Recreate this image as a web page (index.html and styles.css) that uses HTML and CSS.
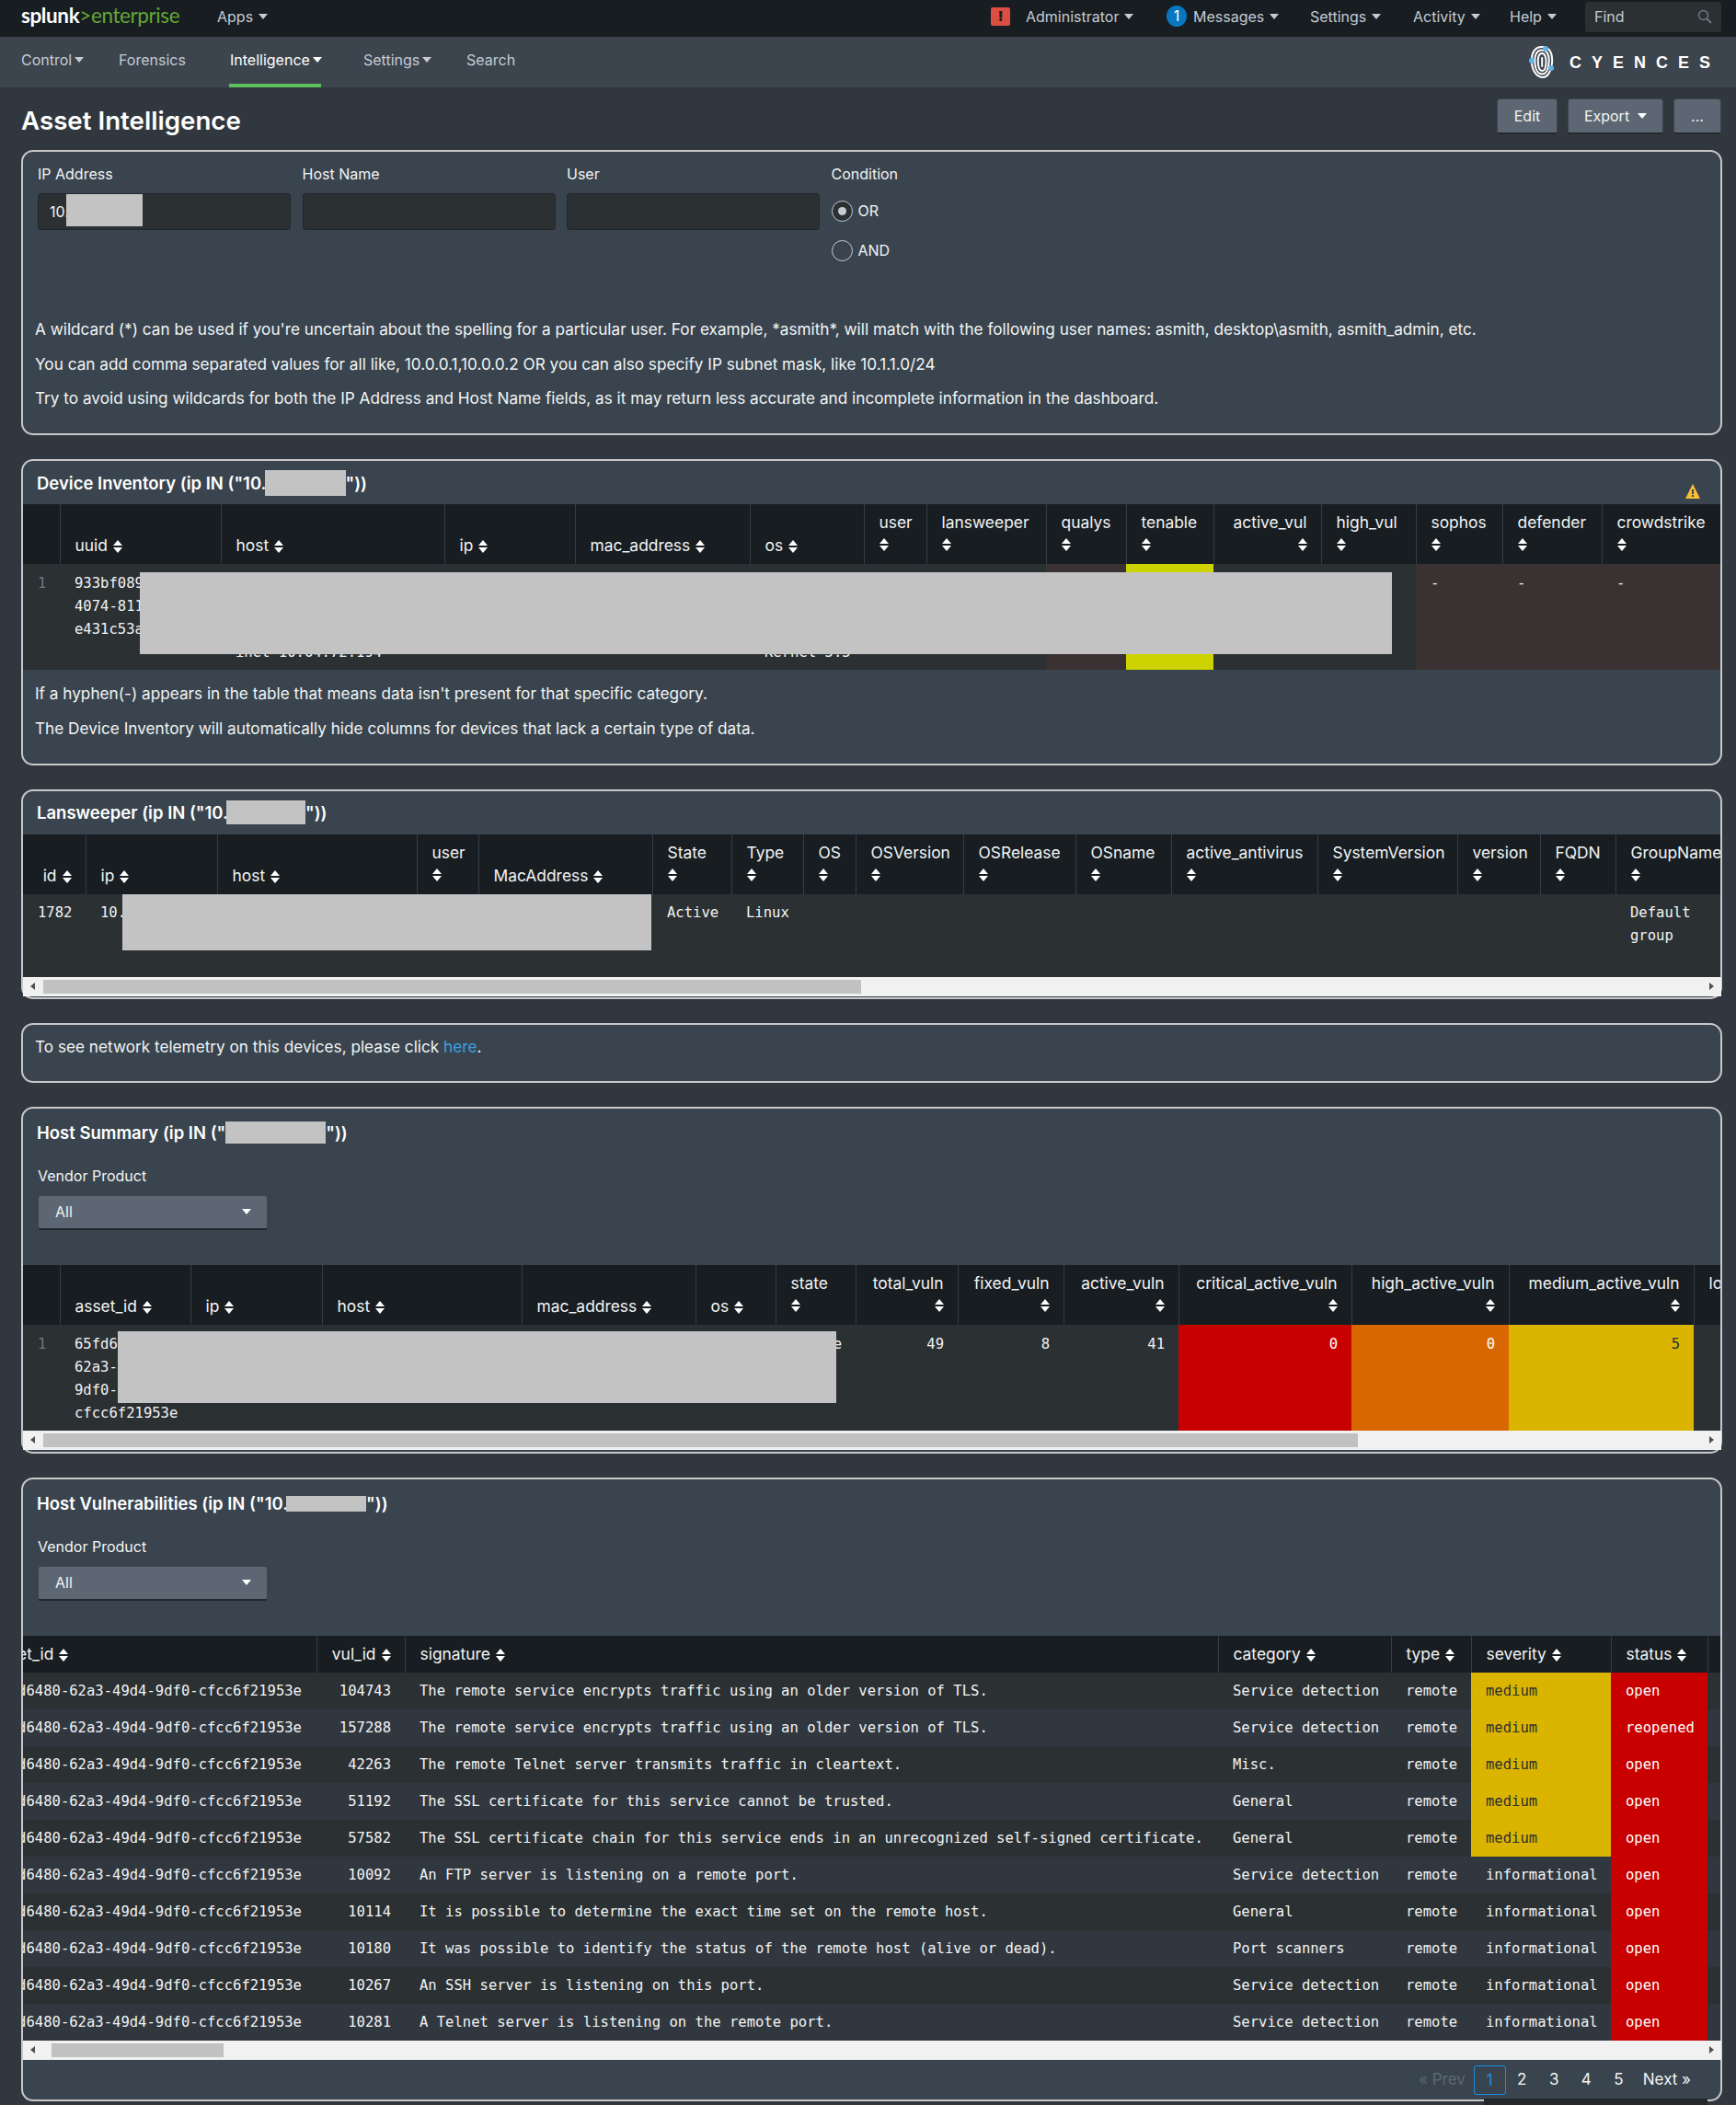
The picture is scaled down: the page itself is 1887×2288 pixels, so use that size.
FILE: index.html
```html
<!DOCTYPE html>
<html lang="en">
<head>
<meta charset="utf-8">
<title>Asset Intelligence</title>
<link rel="stylesheet" href="styles.css">
</head>
<body>
<header class="topbar">
  <div class="brand"><b>splunk</b><i>&gt;</i><span>enterprise</span></div>
  <a class="top-link apps">Apps<s class="caret"></s></a>
  <div class="top-right">
    <span class="alert">!</span>
    <a class="top-link admin">Administrator<s class="caret"></s></a>
    <span class="badge">1</span>
    <a class="top-link msgs">Messages<s class="caret"></s></a>
    <a class="top-link sett">Settings<s class="caret"></s></a>
    <a class="top-link actv">Activity<s class="caret"></s></a>
    <a class="top-link help">Help<s class="caret"></s></a>
    <div class="find">Find
      <svg class="find-ico" viewBox="0 0 16 16"><circle cx="6.5" cy="6.5" r="5" fill="none" stroke="#6f7a85" stroke-width="1.4"/><path d="M10.2 10.2L15 15" stroke="#6f7a85" stroke-width="1.8"/></svg>
    </div>
  </div>
</header>
<nav class="appbar">
  <a class="nav-link n1">Control<s class="caret"></s></a>
  <a class="nav-link n2">Forensics</a>
  <a class="nav-link n3 active">Intelligence<s class="caret"></s></a>
  <a class="nav-link n4">Settings<s class="caret"></s></a>
  <a class="nav-link n5">Search</a>
  <div class="logo">
    <svg class="print" viewBox="0 0 28 38">
      <g fill="none" stroke="#fff" stroke-width="2" stroke-linecap="round">
        <path d="M3 20C2 9 6 2 14 2s12 6 11 18c-1 9-5 15-10 15-6 0-11-6-12-15z"/>
        <path d="M6.500 20C5.500 11 8.500 5.500 14 5.500s8.500 5 7.500 14.500c-.7 7-3.200 11.500-7 11.500C10 31.500 7 27 6.500 20z"/>
        <path d="M10 21C9 13 11 9 14 9s5 4 4.500 11c-.4 5-1.700 8-4 8-2.300 0-4-2.500-4.500-7z"/>
        <path d="M14.200 14v9"/>
      </g>
      <circle cx="18" cy="4" r="3" fill="#62b3e6"/>
      <circle cx="3" cy="17" r="3" fill="#62b3e6"/>
      <circle cx="24" cy="25" r="3" fill="#62b3e6"/>
    </svg>
    <span class="logo-text">CYENCES</span>
  </div>
</nav>
<main class="page">
  <div class="page-head">
    <h1>Asset Intelligence</h1>
    <div class="actions">
      <a class="btn b-edit">Edit</a>
      <a class="btn b-export">Export<s class="caret white"></s></a>
      <a class="btn b-more">...</a>
    </div>
  </div>

  <section class="panel p-form">
    <div class="form-grid">
      <div><label>IP Address</label><div class="input">10.<span class="redact r-input"></span></div></div>
      <div><label>Host Name</label><div class="input"></div></div>
      <div><label>User</label><div class="input"></div></div>
      <div class="cond"><label>Condition</label>
        <div class="radio r-or"><span class="dot on"></span>OR</div>
        <div class="radio r-and"><span class="dot"></span>AND</div>
      </div>
    </div>
    <div class="notes form-notes">
      <p>A wildcard (*) can be used if you're uncertain about the spelling for a particular user. For example, *asmith*, will match with the following user names: asmith, desktop\asmith, asmith_admin, etc.</p>
      <p>You can add comma separated values for all like, 10.0.0.1,10.0.0.2 OR you can also specify IP subnet mask, like 10.1.1.0/24</p>
      <p>Try to avoid using wildcards for both the IP Address and Host Name fields, as it may return less accurate and incomplete information in the dashboard.</p>
    </div>
  </section>

  <section class="panel p-device">
    <h2>Device Inventory (ip IN ("10.<span class="redact r-t1"></span>"))<svg class="warn" viewBox="0 0 18 18"><path d="M9 1L17 17H1z" fill="#f8be34"/><path d="M8 7h2v5H8zM8 13h2v2H8z" fill="#39444e"/></svg></h2>
    <div class="table-wrap">
      <table class="dt t-device">
        <colgroup><col class="c40"><col class="c175"><col class="c243"><col class="c142"><col class="c190"><col class="c124"><col class="c68"><col class="c130"><col class="c87"><col class="c95"><col class="c117"><col class="c103"><col class="c94"><col class="c108"><col class="c130"></colgroup>
        <thead><tr>
          <th></th>
          <th>uuid<s class="sort"></s></th>
          <th>host<s class="sort"></s></th>
          <th>ip<s class="sort"></s></th>
          <th>mac_address<s class="sort"></s></th>
          <th>os<s class="sort"></s></th>
          <th class="stack">user<s class="sort"></s></th>
          <th class="stack">lansweeper<s class="sort"></s></th>
          <th class="stack">qualys<s class="sort"></s></th>
          <th class="stack">tenable<s class="sort"></s></th>
          <th class="stack num">active_vul<s class="sort"></s></th>
          <th class="stack">high_vul<s class="sort"></s></th>
          <th class="stack">sophos<s class="sort"></s></th>
          <th class="stack">defender<s class="sort"></s></th>
          <th class="stack">crowdstrike<s class="sort"></s></th>
        </tr></thead>
        <tbody><tr>
          <td class="rn">1</td>
          <td>933bf089<br>4074-811<br>e431c53a</td>
          <td><br><br><br>inet 10.64.72.194</td>
          <td></td><td></td>
          <td><br><br><br>Kernel 5.5</td>
          <td></td><td></td>
          <td class="c-brown"></td>
          <td class="c-lime"></td>
          <td></td><td></td>
          <td class="c-brown">-</td>
          <td class="c-brown">-</td>
          <td class="c-brown">-</td>
        </tr></tbody>
      </table>
      <div class="redact over o-device"></div>
    </div>
    <div class="notes">
      <p>If a hyphen(-) appears in the table that means data isn't present for that specific category.</p>
      <p>The Device Inventory will automatically hide columns for devices that lack a certain type of data.</p>
    </div>
  </section>

  <section class="panel p-lans">
    <h2>Lansweeper (ip IN ("10.<span class="redact r-t2"></span>"))</h2>
    <div class="table-wrap">
      <table class="dt t-lans">
        <colgroup><col class="c68"><col class="c143"><col class="c217"><col class="c67"><col class="c189"><col class="c86"><col class="c78"><col class="c57"><col class="c117"><col class="c122"><col class="c104"><col class="c159"><col class="c152"><col class="c90"><col class="c82"><col class="c130"></colgroup>
        <thead><tr>
          <th class="num">id<s class="sort"></s></th>
          <th>ip<s class="sort"></s></th>
          <th>host<s class="sort"></s></th>
          <th class="stack">user<s class="sort"></s></th>
          <th>MacAddress<s class="sort"></s></th>
          <th class="stack">State<s class="sort"></s></th>
          <th class="stack">Type<s class="sort"></s></th>
          <th class="stack">OS<s class="sort"></s></th>
          <th class="stack">OSVersion<s class="sort"></s></th>
          <th class="stack">OSRelease<s class="sort"></s></th>
          <th class="stack">OSname<s class="sort"></s></th>
          <th class="stack">active_antivirus<s class="sort"></s></th>
          <th class="stack">SystemVersion<s class="sort"></s></th>
          <th class="stack">version<s class="sort"></s></th>
          <th class="stack">FQDN<s class="sort"></s></th>
          <th class="stack">GroupName<s class="sort"></s></th>
        </tr></thead>
        <tbody><tr class="h90">
          <td class="num">1782</td><td>10.</td><td></td><td></td><td></td>
          <td>Active</td><td>Linux</td><td></td><td></td><td></td><td></td><td></td><td></td><td></td><td></td>
          <td>Default<br>group</td>
        </tr></tbody>
      </table>
      <div class="redact over o-lans"></div>
    </div>
    <div class="hscroll"><s class="arrow left"></s><div class="thumb th-lans"></div><s class="arrow right"></s></div>
  </section>

  <section class="panel p-tele">
    <div class="notes">
      <p>To see network telemetry on this devices, please click <a class="link">here</a>.</p>
    </div>
  </section>

  <section class="panel p-sum">
    <h2 class="tall">Host Summary (ip IN ("<span class="redact r-t3"></span>"))</h2>
    <div class="filter">
      <label>Vendor Product</label>
      <div class="select">All<s class="caret white"></s></div>
    </div>
    <div class="table-wrap">
      <table class="dt t-sum">
        <colgroup><col class="c40"><col class="c142"><col class="c143"><col class="c217"><col class="c189"><col class="c87"><col class="c87"><col class="c111"><col class="c115"><col class="c125"><col class="c188"><col class="c171"><col class="c201"><col class="c130"></colgroup>
        <thead><tr>
          <th></th>
          <th>asset_id<s class="sort"></s></th>
          <th>ip<s class="sort"></s></th>
          <th>host<s class="sort"></s></th>
          <th>mac_address<s class="sort"></s></th>
          <th>os<s class="sort"></s></th>
          <th class="stack">state<s class="sort"></s></th>
          <th class="stack num">total_vuln<s class="sort"></s></th>
          <th class="stack num">fixed_vuln<s class="sort"></s></th>
          <th class="stack num">active_vuln<s class="sort"></s></th>
          <th class="stack num">critical_active_vuln<s class="sort"></s></th>
          <th class="stack num">high_active_vuln<s class="sort"></s></th>
          <th class="stack num">medium_active_vuln<s class="sort"></s></th>
          <th class="stack low">low_active_vuln<s class="sort"></s></th>
        </tr></thead>
        <tbody><tr>
          <td class="rn">1</td>
          <td>65fd6480-<br>62a3-49d4-<br>9df0-<br>cfcc6f21953e</td>
          <td></td><td></td><td></td><td></td>
          <td>Active</td>
          <td class="num">49</td><td class="num">8</td><td class="num">41</td>
          <td class="num c-red">0</td>
          <td class="num c-orange">0</td>
          <td class="num c-yellow">5</td>
          <td class="num"></td>
        </tr></tbody>
      </table>
      <div class="redact over o-sum"></div>
    </div>
    <div class="hscroll"><s class="arrow left"></s><div class="thumb th-sum"></div><s class="arrow right"></s></div>
  </section>

  <section class="panel p-vuln">
    <h2 class="tall">Host Vulnerabilities (ip IN ("10.<span class="redact r-t4"></span>"))</h2>
    <div class="filter">
      <label>Vendor Product</label>
      <div class="select">All<s class="caret white"></s></div>
    </div>
    <div class="table-wrap">
      <table class="dt t-vuln">
        <colgroup><col class="c369"><col class="c96"><col class="c884"><col class="c188"><col class="c87"><col class="c152"><col class="c105"><col class="c16"></colgroup>
        <thead><tr>
          <th>asset_id<s class="sort"></s></th>
          <th class="num">vul_id<s class="sort"></s></th>
          <th>signature<s class="sort"></s></th>
          <th>category<s class="sort"></s></th>
          <th>type<s class="sort"></s></th>
          <th>severity<s class="sort"></s></th>
          <th>status<s class="sort"></s></th>
          <th></th>
        </tr></thead>
        <tbody>
          <tr><td>65fd6480-62a3-49d4-9df0-cfcc6f21953e</td><td class="num">104743</td><td>The remote service encrypts traffic using an older version of TLS.</td><td>Service detection</td><td>remote</td><td class="c-yellow">medium</td><td class="c-red">open</td><td></td></tr>
          <tr><td>65fd6480-62a3-49d4-9df0-cfcc6f21953e</td><td class="num">157288</td><td>The remote service encrypts traffic using an older version of TLS.</td><td>Service detection</td><td>remote</td><td class="c-yellow">medium</td><td class="c-red">reopened</td><td></td></tr>
          <tr><td>65fd6480-62a3-49d4-9df0-cfcc6f21953e</td><td class="num">42263</td><td>The remote Telnet server transmits traffic in cleartext.</td><td>Misc.</td><td>remote</td><td class="c-yellow">medium</td><td class="c-red">open</td><td></td></tr>
          <tr><td>65fd6480-62a3-49d4-9df0-cfcc6f21953e</td><td class="num">51192</td><td>The SSL certificate for this service cannot be trusted.</td><td>General</td><td>remote</td><td class="c-yellow">medium</td><td class="c-red">open</td><td></td></tr>
          <tr><td>65fd6480-62a3-49d4-9df0-cfcc6f21953e</td><td class="num">57582</td><td>The SSL certificate chain for this service ends in an unrecognized self-signed certificate.</td><td>General</td><td>remote</td><td class="c-yellow">medium</td><td class="c-red">open</td><td></td></tr>
          <tr><td>65fd6480-62a3-49d4-9df0-cfcc6f21953e</td><td class="num">10092</td><td>An FTP server is listening on a remote port.</td><td>Service detection</td><td>remote</td><td>informational</td><td class="c-red">open</td><td></td></tr>
          <tr><td>65fd6480-62a3-49d4-9df0-cfcc6f21953e</td><td class="num">10114</td><td>It is possible to determine the exact time set on the remote host.</td><td>General</td><td>remote</td><td>informational</td><td class="c-red">open</td><td></td></tr>
          <tr><td>65fd6480-62a3-49d4-9df0-cfcc6f21953e</td><td class="num">10180</td><td>It was possible to identify the status of the remote host (alive or dead).</td><td>Port scanners</td><td>remote</td><td>informational</td><td class="c-red">open</td><td></td></tr>
          <tr><td>65fd6480-62a3-49d4-9df0-cfcc6f21953e</td><td class="num">10267</td><td>An SSH server is listening on this port.</td><td>Service detection</td><td>remote</td><td>informational</td><td class="c-red">open</td><td></td></tr>
          <tr><td>65fd6480-62a3-49d4-9df0-cfcc6f21953e</td><td class="num">10281</td><td>A Telnet server is listening on the remote port.</td><td>Service detection</td><td>remote</td><td>informational</td><td class="c-red">open</td><td></td></tr>
        </tbody>
      </table>
    </div>
    <div class="hscroll"><s class="arrow left"></s><div class="thumb th-vuln"></div><s class="arrow right"></s></div>
    <div class="pager">
      <a class="pg prev">« Prev</a>
      <a class="pg cur">1</a>
      <a class="pg">2</a>
      <a class="pg">3</a>
      <a class="pg">4</a>
      <a class="pg">5</a>
      <a class="pg next">Next »</a>
    </div>
  </section>
  <div class="corner-strip"></div>
</main>
</body>
</html>
```
FILE: styles.css
```css
* { box-sizing: border-box; }
html, body { margin: 0; padding: 0; }
body {
  background: #31373e;
  color: #f2f4f5;
  font-family: "Inter", "Liberation Sans", sans-serif;
  font-size: 16px;
  line-height: 22px;
}
s { text-decoration: none; }
a { cursor: pointer; }

/* top bar */
.topbar {
  height: 40px;
  background: #171d21;
  display: flex;
  align-items: center;
  padding: 0 0 5px 23px;
  color: #c3cbd4;
}
.brand { width: 213px; font-family: "Lato", sans-serif; font-size: 22.500px; letter-spacing: -0.4px; color: #65a637; padding-bottom: 1px; }
.brand b { color: #fff; font-weight: 700; }
.brand i { font-style: normal; }
.top-link { display: flex; align-items: center; white-space: nowrap; color: #c3cbd4; }
.caret {
  display: inline-block;
  width: 0; height: 0;
  margin-left: 6px;
  border-left: 5px solid transparent;
  border-right: 5px solid transparent;
  border-top: 6px solid #c3cbd4;
}
.caret.white { border-top-color: #fff; }
.top-right { margin-left: auto; display: flex; align-items: center; padding-right: 16px; }
.alert {
  width: 21px; height: 20px;
  background: #dc4e41;
  border-radius: 2px;
  color: #171d21;
  font-weight: 900;
  font-size: 15px;
  line-height: 20px;
  text-align: center;
  margin-right: 17px;
}
.admin { width: 153px; }
.badge {
  width: 22px; height: 23px;
  border-radius: 50%;
  background: #0877c0;
  color: #fff;
  text-align: center;
  line-height: 23px;
  margin-right: 7px;
}
.msgs { width: 127px; }
.sett { width: 112px; }
.actv { width: 105px; }
.help { width: 82px; }
.find {
  width: 148px; height: 33px;
  background: #2b3033;
  border-radius: 3px;
  padding: 5px 10px;
  display: flex;
  justify-content: space-between;
  align-items: center;
  margin-top: 1px;
}
.find-ico { width: 16px; height: 16px; }

/* app bar */
.appbar {
  height: 55px;
  background: #3c444d;
  display: flex;
  align-items: stretch;
  padding-left: 23px;
}
.nav-link {
  display: flex;
  align-items: center;
  color: #c3cbd4;
  height: 55px;
  padding-bottom: 2px;
  border-bottom: 4px solid transparent;
  white-space: nowrap;
}
.nav-link .caret { margin-left: 3px; }
.nav-link.active { color: #fff; border-bottom-color: #5cc05c; width: 100px; padding-left: 1px; }
.nav-link.active .caret { border-top-color: #fff; }
.n1 { width: 106px; }
.n2 { width: 120px; }
.n3 { margin-right: 46px; }
.n4 { width: 112px; }
.logo { margin-left: auto; display: flex; align-items: center; padding-right: 28px; }
.print { width: 28px; height: 38px; margin-right: 16px; }
.logo-text { font-family: "Liberation Sans", sans-serif; font-weight: 700; font-size: 18px; letter-spacing: 11px; color: #fff; margin-right: -11px; }

/* page */
.page { padding: 0 15px 5px 23px; }
.page-head { display: flex; justify-content: space-between; height: 68px; padding-top: 12px; }
h1 { margin: 0; padding-top: 9px; font-size: 27.700px; line-height: 30px; font-weight: 600; color: #fff; }
.actions { display: flex; gap: 11px; height: 39px; margin-right: 1px; }
.btn {
  display: flex;
  align-items: center;
  justify-content: center;
  height: 39px;
  background: #5c6773;
  border: 1px solid #3c444d;
  border-bottom: 2px solid #23282c;
  border-radius: 3px;
  color: #f2f4f5;
}
.btn .caret { margin-left: 9px; }
.b-edit { width: 66px; }
.b-export { width: 104px; }
.b-more { width: 52px; }

/* panels */
.panel {
  width: 1849px;
  background: #39444e;
  border: 2px solid #c8c8c8;
  border-radius: 13px;
  margin-bottom: 26px;
}
h2 {
  position: relative;
  margin: 0;
  height: 47px;
  padding-left: 15px;
  display: flex;
  align-items: center;
  font-size: 18.500px;
  font-weight: 600;
  color: #fff;
  white-space: nowrap;
}
h2.tall { height: 50px; padding-top: 3px; }
.warn { position: absolute; right: 21px; top: 24px; width: 18px; height: 18px; }
.redact { display: inline-block; background: #c3c3c3; }
.r-input { width: 83px; height: 35px; align-self: flex-start; margin-left: -3px; }
.r-t1 { width: 88px; height: 28px; margin-left: -2px; }
.r-t2 { width: 86px; height: 26px; margin-left: -2px; }
.r-t3 { width: 109px; height: 24px; }
.r-t4 { width: 87px; height: 17px; margin-left: -2px; }
.over { position: absolute; }
.o-device { left: 127px; top: 74px; width: 1361px; height: 89px; }
.o-lans { left: 108px; top: 65px; width: 575px; height: 61px; }
.o-sum { left: 103px; top: 72px; width: 781px; height: 78px; }
.corner-strip { position: absolute; left: 1613px; top: 2281px; width: 243px; height: 7px; background: #23282c; }

/* form panel */
.form-grid {
  display: grid;
  grid-template-columns: 275px 275px 275px auto;
  column-gap: 12.500px;
  padding: 14px 16px 0;
  height: 167px;
}
label { display: block; height: 20px; line-height: 20px; margin-bottom: 11px; color: #f2f4f5; }
.input {
  height: 40px;
  background: #2b3033;
  border: 1px solid #23282c;
  border-radius: 3px;
  padding-left: 12px;
  display: flex;
  align-items: center;
  color: #f2f4f5;
}
.radio { display: flex; align-items: center; height: 22px; }
.r-or { margin-top: 19px; }
.r-and { margin-top: 21px; }
.dot {
  position: relative;
  width: 23px; height: 23px;
  border: 1px solid #c3cbd4;
  border-radius: 50%;
  margin-right: 6px;
}
.dot.on { background: #2b3033; }
.dot.on::after {
  content: "";
  position: absolute;
  left: 6px; top: 6px;
  width: 9px; height: 9px;
  border-radius: 50%;
  background: #c3cbd4;
}
.notes { padding: 15px 13px 27px; }
.notes p { margin: 0 0 15.500px; color: #f2f4f5; font-size: 17.200px; }
.notes p:last-child { margin-bottom: 0; }
.link { color: #3c9fe0; }
.p-tele .notes { padding-top: 13px; padding-bottom: 26px; }

/* filter */
.filter { padding: 13px 16px 38px; }
.select {
  width: 250px; height: 38px;
  background: #5c6773;
  border: 1px solid #3c444d;
  border-bottom: 2px solid #23282c;
  border-radius: 3px;
  padding: 0 17px 0 18px;
  display: flex;
  align-items: center;
  justify-content: space-between;
  color: #f2f4f5;
}

/* tables */
.table-wrap { position: relative; overflow: hidden; width: 1845px; }
.dt { table-layout: fixed; border-collapse: collapse; border-spacing: 0; width: 0; }
.c16 { width: 16px; } .c40 { width: 40px; } .c57 { width: 57px; } .c67 { width: 67px; } .c68 { width: 68px; }
.c78 { width: 78px; } .c82 { width: 82px; } .c86 { width: 86px; } .c87 { width: 87px; } .c90 { width: 90px; }
.c94 { width: 94px; } .c95 { width: 95px; } .c96 { width: 96px; } .c103 { width: 103px; } .c104 { width: 104px; }
.c105 { width: 105px; } .c108 { width: 108px; } .c111 { width: 111px; } .c115 { width: 115px; } .c117 { width: 117px; }
.c122 { width: 122px; } .c124 { width: 124px; } .c125 { width: 125px; } .c130 { width: 130px; } .c142 { width: 142px; }
.c143 { width: 143px; } .c152 { width: 152px; } .c159 { width: 159px; } .c171 { width: 171px; } .c175 { width: 175px; }
.c188 { width: 188px; } .c189 { width: 189px; } .c190 { width: 190px; } .c201 { width: 201px; } .c217 { width: 217px; }
.c243 { width: 243px; } .c369 { width: 369px; } .c884 { width: 884px; }
.t-vuln { margin-left: -50px; }
.dt th {
  background: #171d21;
  color: #f2f4f5;
  font-weight: 400;
  font-size: 17.400px;
  line-height: 25px;
  padding: 7px 4px 8px 16px;
  text-align: left;
  vertical-align: bottom;
  border-left: 1px solid #333d47;
  white-space: nowrap;
  overflow: hidden;
}
.dt th:first-child { border-left: 0; }
.dt th.num { text-align: right; padding-left: 8px; padding-right: 15px; }
.sort {
  display: inline-block;
  position: relative;
  width: 10px; height: 14px;
  margin-left: 6px;
  vertical-align: -2px;
}
.sort::before, .sort::after {
  content: "";
  position: absolute;
  left: 0;
  border-left: 5px solid transparent;
  border-right: 5px solid transparent;
}
.sort::before { top: 0; border-bottom: 6px solid #fff; }
.sort::after { bottom: 0; border-top: 6px solid #fff; }
.stack .sort { display: block; margin: 5px 0 6px 0; }
.stack.num .sort { margin-left: auto; }
.stack.low .sort { margin-left: 120px; }
.dt td {
  background: #2b3033;
  color: #f2f4f5;
  font-family: "DejaVu Sans Mono", "Liberation Mono", monospace;
  font-size: 15.550px;
  line-height: 25px;
  padding: 9px 15px 6px 16px;
  vertical-align: top;
  white-space: nowrap;
}
.t-vuln td { padding: 8.500px 15px 6.500px 16px; }
.t-vuln tr:nth-child(even) td { background: #31373e; }
.dt td.num { text-align: right; }
.dt td.rn { color: #6f7a85; }
.h90 td { height: 90px; }
.dt .h90 td { padding-top: 8px; }
.dt tr td.c-brown { background: #3a3232; }
.dt tr td.c-lime { background: #ccd300; }
.dt tr td.c-red { background: #c80000; color: #fff; }
.dt tr td.c-orange { background: #d96700; color: #fff; }
.dt tr td.c-yellow { background: #dbb400; color: #2b3033; }

/* scrollbars */
.hscroll {
  position: relative;
  height: 21px;
  background: #f1f1f1;
  width: 1846px;
  padding-top: 3px;
}
.thumb { height: 15px; background: #c1c1c1; }
.th-lans { margin-left: 22px; width: 889px; }
.th-sum { margin-left: 22px; width: 1429px; }
.th-vuln { margin-left: 31px; width: 187px; }
.p-lans .hscroll { margin-bottom: 1px; }
.p-sum .hscroll { margin-bottom: 2px; }
.arrow { position: absolute; top: 6px; width: 0; height: 0; border-top: 4.500px solid transparent; border-bottom: 4.500px solid transparent; }
.arrow.left { left: 8px; border-right: 5px solid #505050; }
.arrow.right { right: 8px; border-left: 5px solid #505050; }

/* pager */
.pager {
  display: flex;
  justify-content: flex-end;
  align-items: center;
  height: 43px;
  padding-top: 1px;
  padding-right: 32px;
  font-size: 17px;
  color: #f2f4f5;
}
.pg { width: 35px; height: 32px; line-height: 30px; text-align: center; }
.prev { width: auto; color: #5c6773; margin-right: 9px; font-size: 17px; }
.cur { border: 1px solid #1a8ee0; border-radius: 3px; color: #1a8ee0; }
.next { width: auto; margin-left: 9px; }
```
